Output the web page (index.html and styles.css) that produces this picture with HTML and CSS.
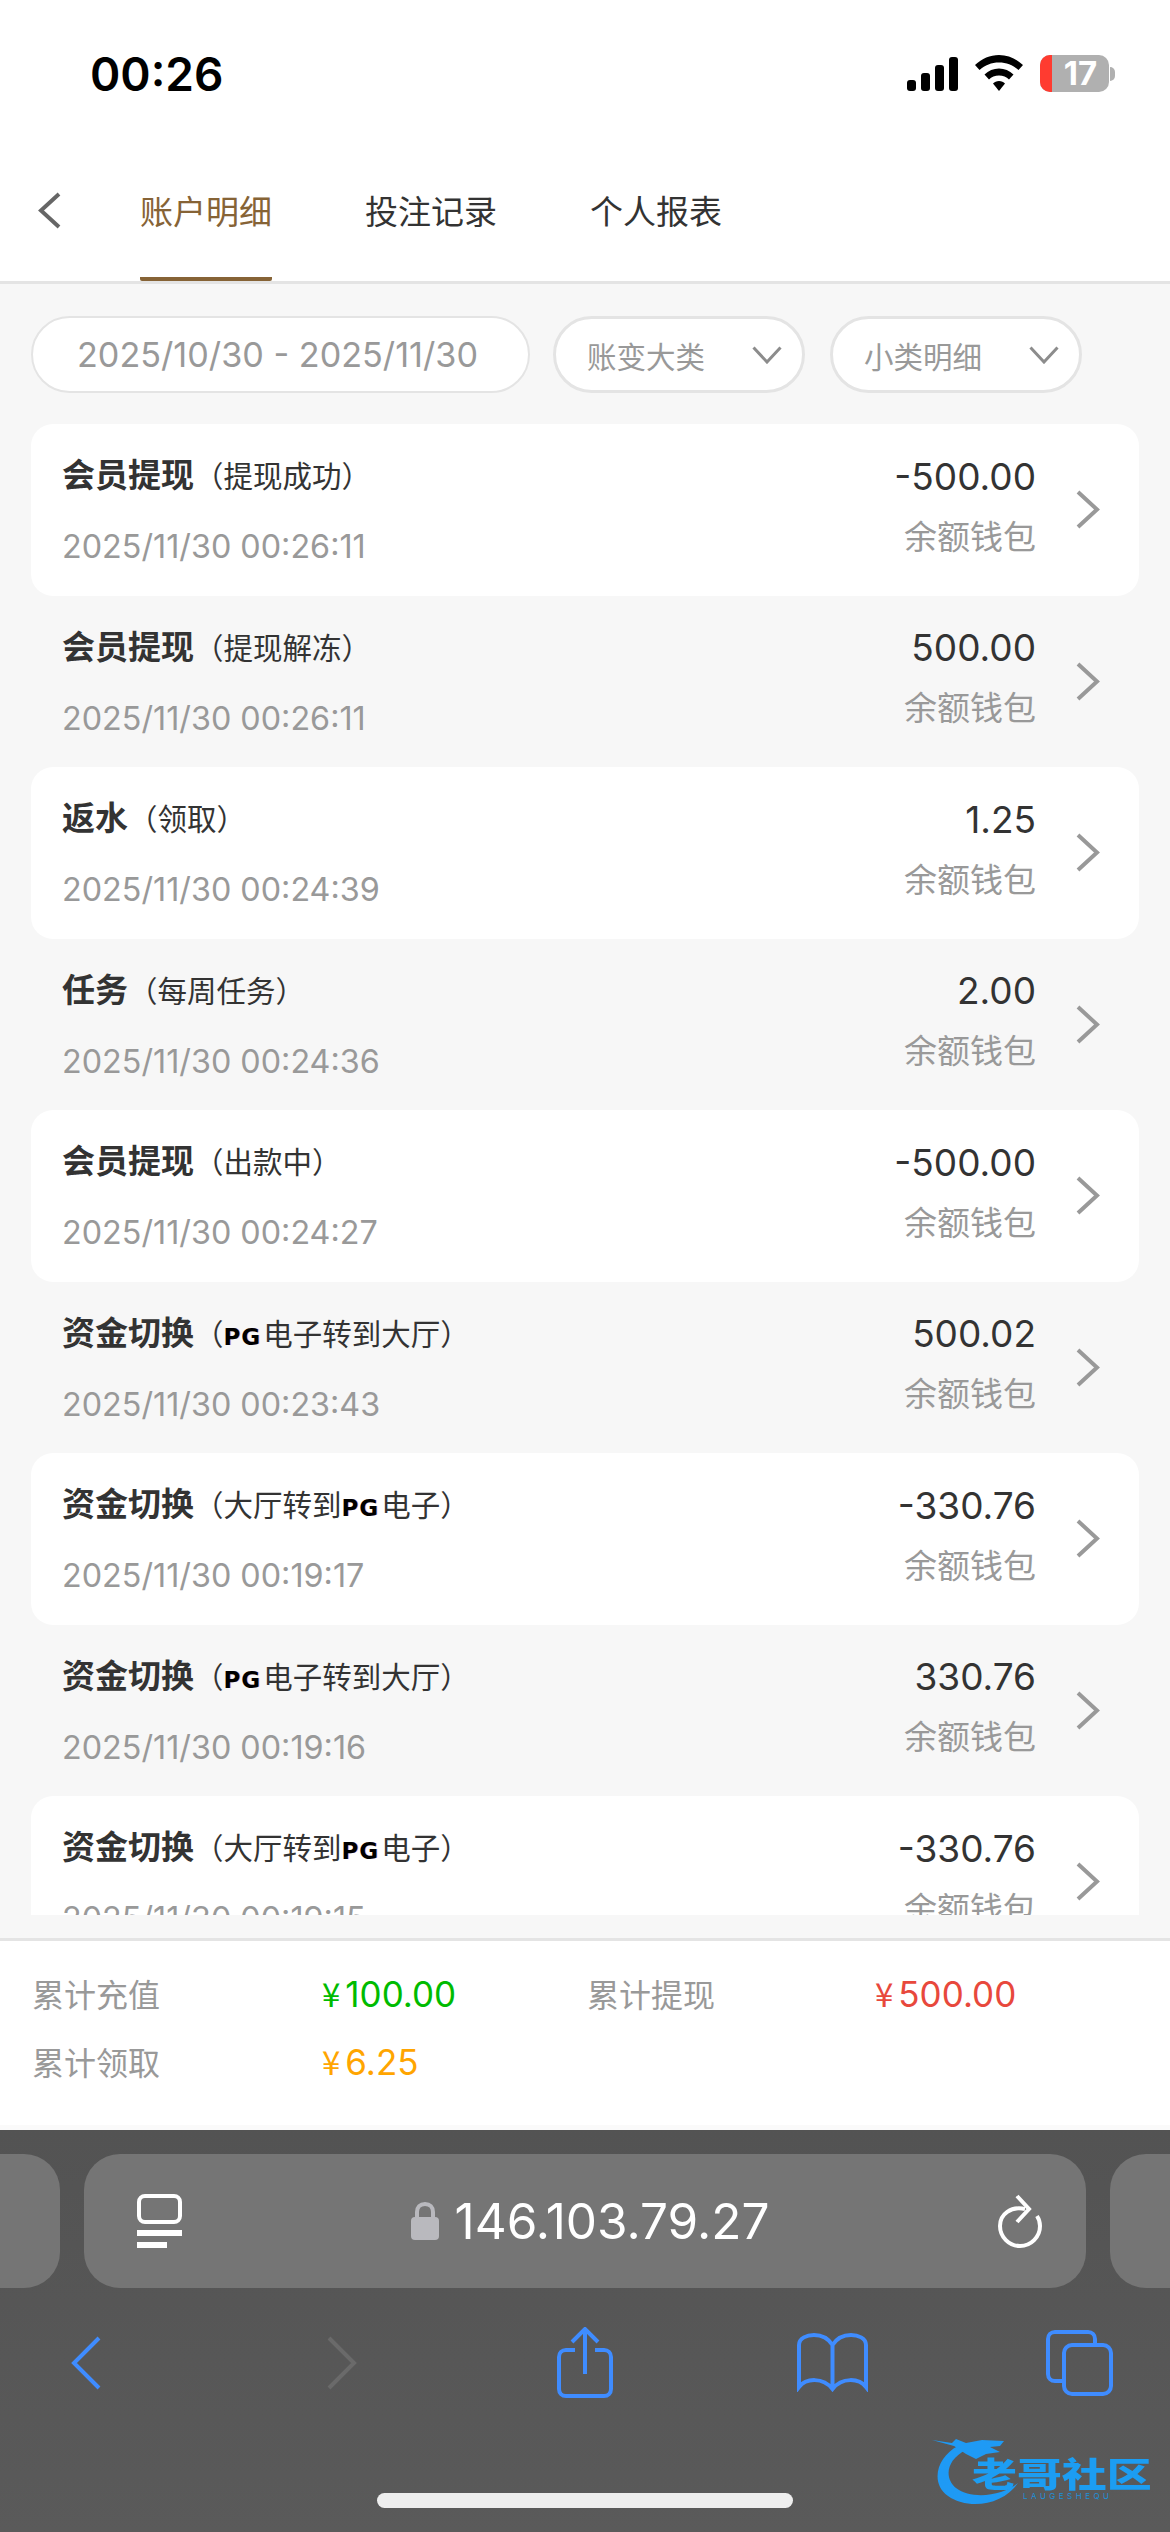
FILE: index.html
```html
<!DOCTYPE html>
<html lang="zh-CN">
<head>
    <meta charset="UTF-8">
    <meta name="viewport" content="width=device-width, initial-scale=1.0">
    <title>账户明细</title>
    <link rel="stylesheet" href="styles.css">
</head>
<body>
    <div class="page">
        <!-- status bar -->
        <div class="status-bar">
            <span class="time">00:26</span>
            <div class="status-icons">
                <svg class="signal" width="51" height="34" viewBox="0 0 51 34">
                    <rect x="0" y="23" width="9" height="11" rx="3"/>
                    <rect x="14" y="16" width="9" height="18" rx="3"/>
                    <rect x="28" y="8" width="9" height="26" rx="3"/>
                    <rect x="42" y="0" width="9" height="34" rx="3"/>
                </svg>
                <svg class="wifi" width="48" height="36" viewBox="0 0 48 36">
                    <path d="M24 0C15 0 7 3.500 0 10L4.500 15C10 10 16.500 7.500 24 7.500S38 10 43.500 15L48 10C41 3.500 33 0 24 0Z"/>
                    <path d="M24 13.500C18.500 13.500 13.500 15.500 9.500 19.500L14 24.500C16.500 22 20 20.500 24 20.500S31.500 22 34 24.500L38.500 19.500C34.500 15.500 29.500 13.500 24 13.500Z"/>
                    <path d="M24 26C21.500 26 19.500 27 18 28.500L24 36L30 28.500C28.500 27 26.500 26 24 26Z"/>
                </svg>
                <div class="battery">
                    <div class="battery-body">
                        <span class="battery-level"></span>
                        <span class="battery-num">17</span>
                    </div>
                    <span class="battery-cap"></span>
                </div>
            </div>
        </div>

        <!-- tabs -->
        <nav class="tabs">
            <svg class="back" width="23" height="37" viewBox="0 0 23 37">
                <path d="M21 2L3 18.500L21 35"/>
            </svg>
            <a class="tab active">账户明细</a>
            <a class="tab">投注记录</a>
            <a class="tab">个人报表</a>
        </nav>

        <!-- filters -->
        <div class="filters">
            <div class="chip chip-date">2025/10/30 - 2025/11/30</div>
            <div class="chip chip-select">
                <span>账变大类</span>
                <svg width="30" height="18" viewBox="0 0 30 18"><path d="M1.500 1.500L15 16L28.500 1.500"/></svg>
            </div>
            <div class="chip chip-select">
                <span>小类明细</span>
                <svg width="30" height="18" viewBox="0 0 30 18"><path d="M1.500 1.500L15 16L28.500 1.500"/></svg>
            </div>
        </div>

        <!-- records -->
        <div class="list">
            <div class="row">
                <div class="row-left">
                    <div class="row-title"><b>会员提现</b><span>（提现成功）</span></div>
                    <div class="row-date">2025/11/30 00:26:11</div>
                </div>
                <div class="row-right">
                    <div class="row-amount">-500.00</div>
                    <div class="row-wallet">余额钱包</div>
                </div>
                <svg class="arrow" width="25" height="39" viewBox="0 0 25 39"><path d="M3 2L22 19.500L3 37"/></svg>
            </div>
            <div class="row">
                <div class="row-left">
                    <div class="row-title"><b>会员提现</b><span>（提现解冻）</span></div>
                    <div class="row-date">2025/11/30 00:26:11</div>
                </div>
                <div class="row-right">
                    <div class="row-amount">500.00</div>
                    <div class="row-wallet">余额钱包</div>
                </div>
                <svg class="arrow" width="25" height="39" viewBox="0 0 25 39"><path d="M3 2L22 19.500L3 37"/></svg>
            </div>
            <div class="row">
                <div class="row-left">
                    <div class="row-title"><b>返水</b><span>（领取）</span></div>
                    <div class="row-date">2025/11/30 00:24:39</div>
                </div>
                <div class="row-right">
                    <div class="row-amount">1.25</div>
                    <div class="row-wallet">余额钱包</div>
                </div>
                <svg class="arrow" width="25" height="39" viewBox="0 0 25 39"><path d="M3 2L22 19.500L3 37"/></svg>
            </div>
            <div class="row">
                <div class="row-left">
                    <div class="row-title"><b>任务</b><span>（每周任务）</span></div>
                    <div class="row-date">2025/11/30 00:24:36</div>
                </div>
                <div class="row-right">
                    <div class="row-amount">2.00</div>
                    <div class="row-wallet">余额钱包</div>
                </div>
                <svg class="arrow" width="25" height="39" viewBox="0 0 25 39"><path d="M3 2L22 19.500L3 37"/></svg>
            </div>
            <div class="row">
                <div class="row-left">
                    <div class="row-title"><b>会员提现</b><span>（出款中）</span></div>
                    <div class="row-date">2025/11/30 00:24:27</div>
                </div>
                <div class="row-right">
                    <div class="row-amount">-500.00</div>
                    <div class="row-wallet">余额钱包</div>
                </div>
                <svg class="arrow" width="25" height="39" viewBox="0 0 25 39"><path d="M3 2L22 19.500L3 37"/></svg>
            </div>
            <div class="row">
                <div class="row-left">
                    <div class="row-title"><b>资金切换</b><span>（<i class="pg">PG</i>电子转到大厅）</span></div>
                    <div class="row-date">2025/11/30 00:23:43</div>
                </div>
                <div class="row-right">
                    <div class="row-amount">500.02</div>
                    <div class="row-wallet">余额钱包</div>
                </div>
                <svg class="arrow" width="25" height="39" viewBox="0 0 25 39"><path d="M3 2L22 19.500L3 37"/></svg>
            </div>
            <div class="row">
                <div class="row-left">
                    <div class="row-title"><b>资金切换</b><span>（大厅转到<i class="pg">PG</i>电子）</span></div>
                    <div class="row-date">2025/11/30 00:19:17</div>
                </div>
                <div class="row-right">
                    <div class="row-amount">-330.76</div>
                    <div class="row-wallet">余额钱包</div>
                </div>
                <svg class="arrow" width="25" height="39" viewBox="0 0 25 39"><path d="M3 2L22 19.500L3 37"/></svg>
            </div>
            <div class="row">
                <div class="row-left">
                    <div class="row-title"><b>资金切换</b><span>（<i class="pg">PG</i>电子转到大厅）</span></div>
                    <div class="row-date">2025/11/30 00:19:16</div>
                </div>
                <div class="row-right">
                    <div class="row-amount">330.76</div>
                    <div class="row-wallet">余额钱包</div>
                </div>
                <svg class="arrow" width="25" height="39" viewBox="0 0 25 39"><path d="M3 2L22 19.500L3 37"/></svg>
            </div>
            <div class="row">
                <div class="row-left">
                    <div class="row-title"><b>资金切换</b><span>（大厅转到<i class="pg">PG</i>电子）</span></div>
                    <div class="row-date">2025/11/30 00:19:15</div>
                </div>
                <div class="row-right">
                    <div class="row-amount">-330.76</div>
                    <div class="row-wallet">余额钱包</div>
                </div>
                <svg class="arrow" width="25" height="39" viewBox="0 0 25 39"><path d="M3 2L22 19.500L3 37"/></svg>
            </div>
        </div>

        <!-- totals -->
        <div class="totals">
            <span class="total-label">累计充值</span>
            <span class="total-value green"><em>¥</em>100.00</span>
            <span class="total-label">累计提现</span>
            <span class="total-value red"><em>¥</em>500.00</span>
            <span class="total-label">累计领取</span>
            <span class="total-value orange"><em>¥</em>6.25</span>
        </div>

        <!-- safari chrome -->
        <div class="browser">
            <div class="url-row">
                <div class="url-side url-side-left"></div>
                <div class="url-bar">
                    <svg class="reader" width="45" height="54" viewBox="0 0 45 54">
                        <rect x="2" y="2" width="41" height="26" rx="6"/>
                        <path d="M0 39H45M0 51H30"/>
                    </svg>
                    <div class="url-text">
                        <svg width="28" height="38" viewBox="0 0 28 38">
                            <path class="lock-loop" d="M6 17V10C6 5 9 2 14 2S22 5 22 10V17"/>
                            <rect x="0" y="15" width="28" height="23" rx="4"/>
                        </svg>
                        <span>146.103.79.27</span>
                    </div>
                    <svg class="reload" width="44" height="54" viewBox="0 0 44 54">
                        <path d="M27 15C13 12 2 20 2 32C2 43 11 52 22 52C33 52 42 43 42 32C42 28 41 25 39 22"/>
                        <path d="M19 2L31 15L19 28"/>
                    </svg>
                </div>
                <div class="url-side url-side-right"></div>
            </div>
            <div class="toolbar">
                <svg width="31" height="54" viewBox="0 0 31 54"><path d="M28 2L3 27L28 52"/></svg>
                <svg class="tool-forward" width="31" height="54" viewBox="0 0 31 54"><path d="M3 2L28 27L3 52"/></svg>
                <svg class="tool-share" width="56" height="71" viewBox="0 0 56 71">
                    <path d="M18 23H9C5 23 2 26 2 30V62C2 66 5 69 9 69H47C51 69 54 66 54 62V30C54 26 51 23 47 23H38"/>
                    <path d="M28 47V3M15 15L28 2L41 15"/>
                </svg>
                <svg class="tool-book" width="71" height="59" viewBox="0 0 71 59">
                    <path d="M35.500 12C31 5 25 2 17 2C10 2 2 5 2 12V54C9 45 26 44 35.500 56C45 44 62 45 69 54V12C69 5 61 2 54 2C46 2 40 5 35.500 12V56"/>
                </svg>
                <svg class="tool-tabs" width="67" height="66" viewBox="0 0 67 66">
                    <path d="M17 51H9C5 51 2 48 2 44V9C2 5 5 2 9 2H42C46 2 49 5 49 9V15"/>
                    <rect x="18" y="15" width="47" height="49" rx="8"/>
                </svg>
            </div>
            <div class="home-bar"></div>
            <!-- watermark -->
            <div class="watermark">
                <svg class="dragon" width="100" height="74" viewBox="0 0 100 74">
                    <path d="M26 14C6 24 -3 50 16 64C36 78 70 74 86 51C70 64 40 68 24 56C12 46 14 28 34 18Z"/>
                    <path d="M0 8L20 11L24 7L34 11L50 8L72 9L68 14L58 15L68 20L54 22L44 27L34 22L22 14Z"/>
                </svg>
                <div class="watermark-name">老哥社区</div>
                <div class="watermark-sub">LAUGESHEQU</div>
            </div>
        </div>
    </div>
</body>
</html>
```

FILE: styles.css
```css
* {
    box-sizing: border-box;
}
body {
    margin: 0;
    background: #fff;
    font-family: Inter, "Noto Sans CJK SC", sans-serif;
}
.page {
    width: 1170px;
    height: 2532px;
    display: flex;
    flex-direction: column;
    overflow: hidden;
    background: #f7f7f7;
}

/* status bar */
.status-bar {
    height: 100px;
    flex: none;
    background: #fff;
    display: flex;
    justify-content: space-between;
    padding: 55px 55px 0 90px;
}
.time {
    font-size: 46px;
    font-weight: 600;
    line-height: 38px;
    color: #000;
}
.status-icons {
    display: flex;
    align-items: flex-start;
}
.signal {
    margin: 2px 17px 0 0;
}
.wifi {
    margin-right: 17px;
}
.battery {
    display: flex;
    align-items: center;
    height: 37px;
}
.battery-body {
    width: 69px;
    height: 37px;
    border-radius: 10px;
    background: #b0b0b0;
    display: flex;
}
.battery-level {
    width: 12px;
    border-radius: 10px 0 0 10px;
    background: #ff3b30;
}
.battery-num {
    flex: 1;
    text-align: center;
    font-size: 33px;
    line-height: 37px;
    font-weight: 700;
    color: #fff;
}
.battery-cap {
    width: 5px;
    height: 14px;
    margin-left: 1px;
    border-radius: 0 7px 7px 0;
    background: #b0b0b0;
}

/* tabs */
.tabs {
    height: 184px;
    flex: none;
    background: #fff;
    border-bottom: 3px solid #e4e4e4;
    display: flex;
    align-items: stretch;
    padding-left: 38px;
}
.back {
    align-self: flex-start;
    margin: 92px 79px 0 0;
    fill: none;
    stroke: #666;
    stroke-width: 4;
}
.tab {
    width: 132px;
    margin-right: 93px;
    padding-top: 88px;
    font-size: 33px;
    line-height: 48px;
    white-space: nowrap;
    color: #333;
}
.tab.active {
    color: #866336;
    border-bottom: 4px solid #866336;
    border-radius: 0 0 2px 2px;
}

/* filters */
.filters {
    height: 140px;
    flex: none;
    display: flex;
    gap: 23px;
    padding: 32px 0 0 31px;
}
.chip {
    height: 77px;
    background: #fff;
    border: 2px solid #e4e4e4;
    border-radius: 39px;
    color: #999;
    display: flex;
    align-items: center;
}
.chip-date {
    width: 499px;
    padding-left: 44px;
    font-size: 34.200px;
    white-space: nowrap;
}
.chip-select {
    width: 252px;
    padding: 0 20px 0 31px;
    border-width: 3px;
    justify-content: space-between;
    font-size: 29.500px;
}
.chip-select svg {
    fill: none;
    stroke: #8c8c8c;
    stroke-width: 3;
}
.chip-select + .chip-select {
    margin-left: 2px;
}

/* records */
.list {
    height: 1491px;
    flex: none;
    margin: 0 31px;
    overflow: hidden;
}
.row {
    height: 171.500px;
    display: flex;
    align-items: center;
    padding: 0 39px 0 32px;
    border-radius: 22px;
}
.row:nth-child(odd) {
    background: #fff;
}
.row-left {
    flex: 1;
    padding-bottom: 1px;
}
.row-title {
    height: 48px;
    margin-bottom: 28px;
    line-height: 48px;
    color: #333;
    white-space: nowrap;
    margin-left: -1px;
}
.row-title b {
    font-size: 33px;
    font-weight: 700;
}
.row-title span {
    font-size: 29.500px;
}
.pg {
    font-family: "DejaVu Sans", sans-serif;
    font-style: normal;
    font-weight: 700;
    font-size: 23px;
    color: #000;
    text-shadow: 1px 0 0 rgba(230, 60, 140, 0.35);
    margin-right: 2px;
    letter-spacing: 1px;
}
.row-date {
    height: 40px;
    font-size: 32.300px;
    line-height: 40px;
    color: #999;
    white-space: nowrap;
    margin-left: -1px;
}
.row-right {
    margin-right: 39px;
    padding-bottom: 8px;
    text-align: right;
}
.row-amount {
    height: 48px;
    margin-bottom: 14px;
    font-size: 37px;
    line-height: 48px;
    color: #333;
}
.row-wallet {
    height: 44px;
    font-size: 33px;
    line-height: 44px;
    color: #999;
}
.arrow {
    flex: none;
    fill: none;
    stroke: #999;
    stroke-width: 4;
}

/* totals */
.totals {
    height: 192px;
    flex: none;
    margin-top: 23px;
    padding: 18px 0 0 32px;
    background: #fff;
    border-top: 3px solid #e4e4e4;
    border-bottom: 5px solid #fafafa;
    display: grid;
    grid-template-columns: 290px 265px 288px 1fr;
    grid-auto-rows: 68px;
    align-items: center;
    font-size: 32px;
}
.total-label {
    color: #999;
}
.total-value {
    font-size: 35px;
}
.total-value em {
    font-family: "Noto Sans CJK SC", sans-serif;
    font-style: normal;
    font-size: 33px;
    margin-right: 5px;
}
.green {
    color: #00bb00;
}
.red {
    color: #e8483c;
}
.orange {
    color: #ffa500;
}

/* safari chrome */
.browser {
    flex: 1;
    background: linear-gradient(#535353, #5a5a5a);
    position: relative;
    padding-top: 24px;
}
.url-row {
    display: flex;
    gap: 24px;
    height: 134px;
    margin-left: -60px;
    width: 1290px;
}
.url-side {
    width: 120px;
    border-radius: 36px;
    background: #757575;
}
.url-bar {
    width: 1002px;
    border-radius: 36px;
    background: #757575;
    display: flex;
    align-items: center;
    justify-content: space-between;
    padding: 0 44px 0 53px;
}
.reader {
    fill: none;
    stroke: #fff;
    stroke-width: 4;
}
.reader path {
    stroke-width: 6;
}
.url-text {
    display: flex;
    align-items: center;
    gap: 16px;
    font-size: 49.500px;
    color: #fff;
}
.url-text svg {
    fill: #b9b9be;
}
.lock-loop {
    fill: none;
    stroke: #b9b9be;
    stroke-width: 4;
}
.reload {
    fill: none;
    stroke: #fff;
    stroke-width: 4;
}
.toolbar {
    display: flex;
    align-items: center;
    padding: 39px 0 0 71px;
    height: 110px;
}
.toolbar svg {
    flex: none;
    fill: none;
    stroke: #3f8cff;
    stroke-width: 4;
}
.toolbar .tool-forward {
    margin-left: 224px;
    stroke: #6a6a6a;
}
.tool-share {
    margin-left: 200px;
}
.tool-book {
    margin-left: 184px;
}
.tool-tabs {
    margin-left: 178px;
}
.home-bar {
    position: absolute;
    left: 377px;
    top: 363px;
    width: 416px;
    height: 15px;
    border-radius: 8px;
    background: #eee;
}

/* watermark */
.watermark {
    position: absolute;
    left: 932px;
    top: 302px;
    width: 222px;
    height: 74px;
}
.dragon {
    position: absolute;
    left: 0;
    top: 0;
    fill: #1e9af5;
}
.watermark-name {
    position: absolute;
    left: 40px;
    top: 26px;
    font-size: 34px;
    line-height: 34px;
    font-weight: 900;
    white-space: nowrap;
    color: #1c9df2;
    transform: scaleX(1.32);
    transform-origin: left center;
    filter: blur(0.4px);
}
.watermark-sub {
    position: absolute;
    left: 91px;
    top: 60px;
    font-size: 8px;
    line-height: 8px;
    letter-spacing: 3.500px;
    color: #1e8fd8;
    white-space: nowrap;
}
```
